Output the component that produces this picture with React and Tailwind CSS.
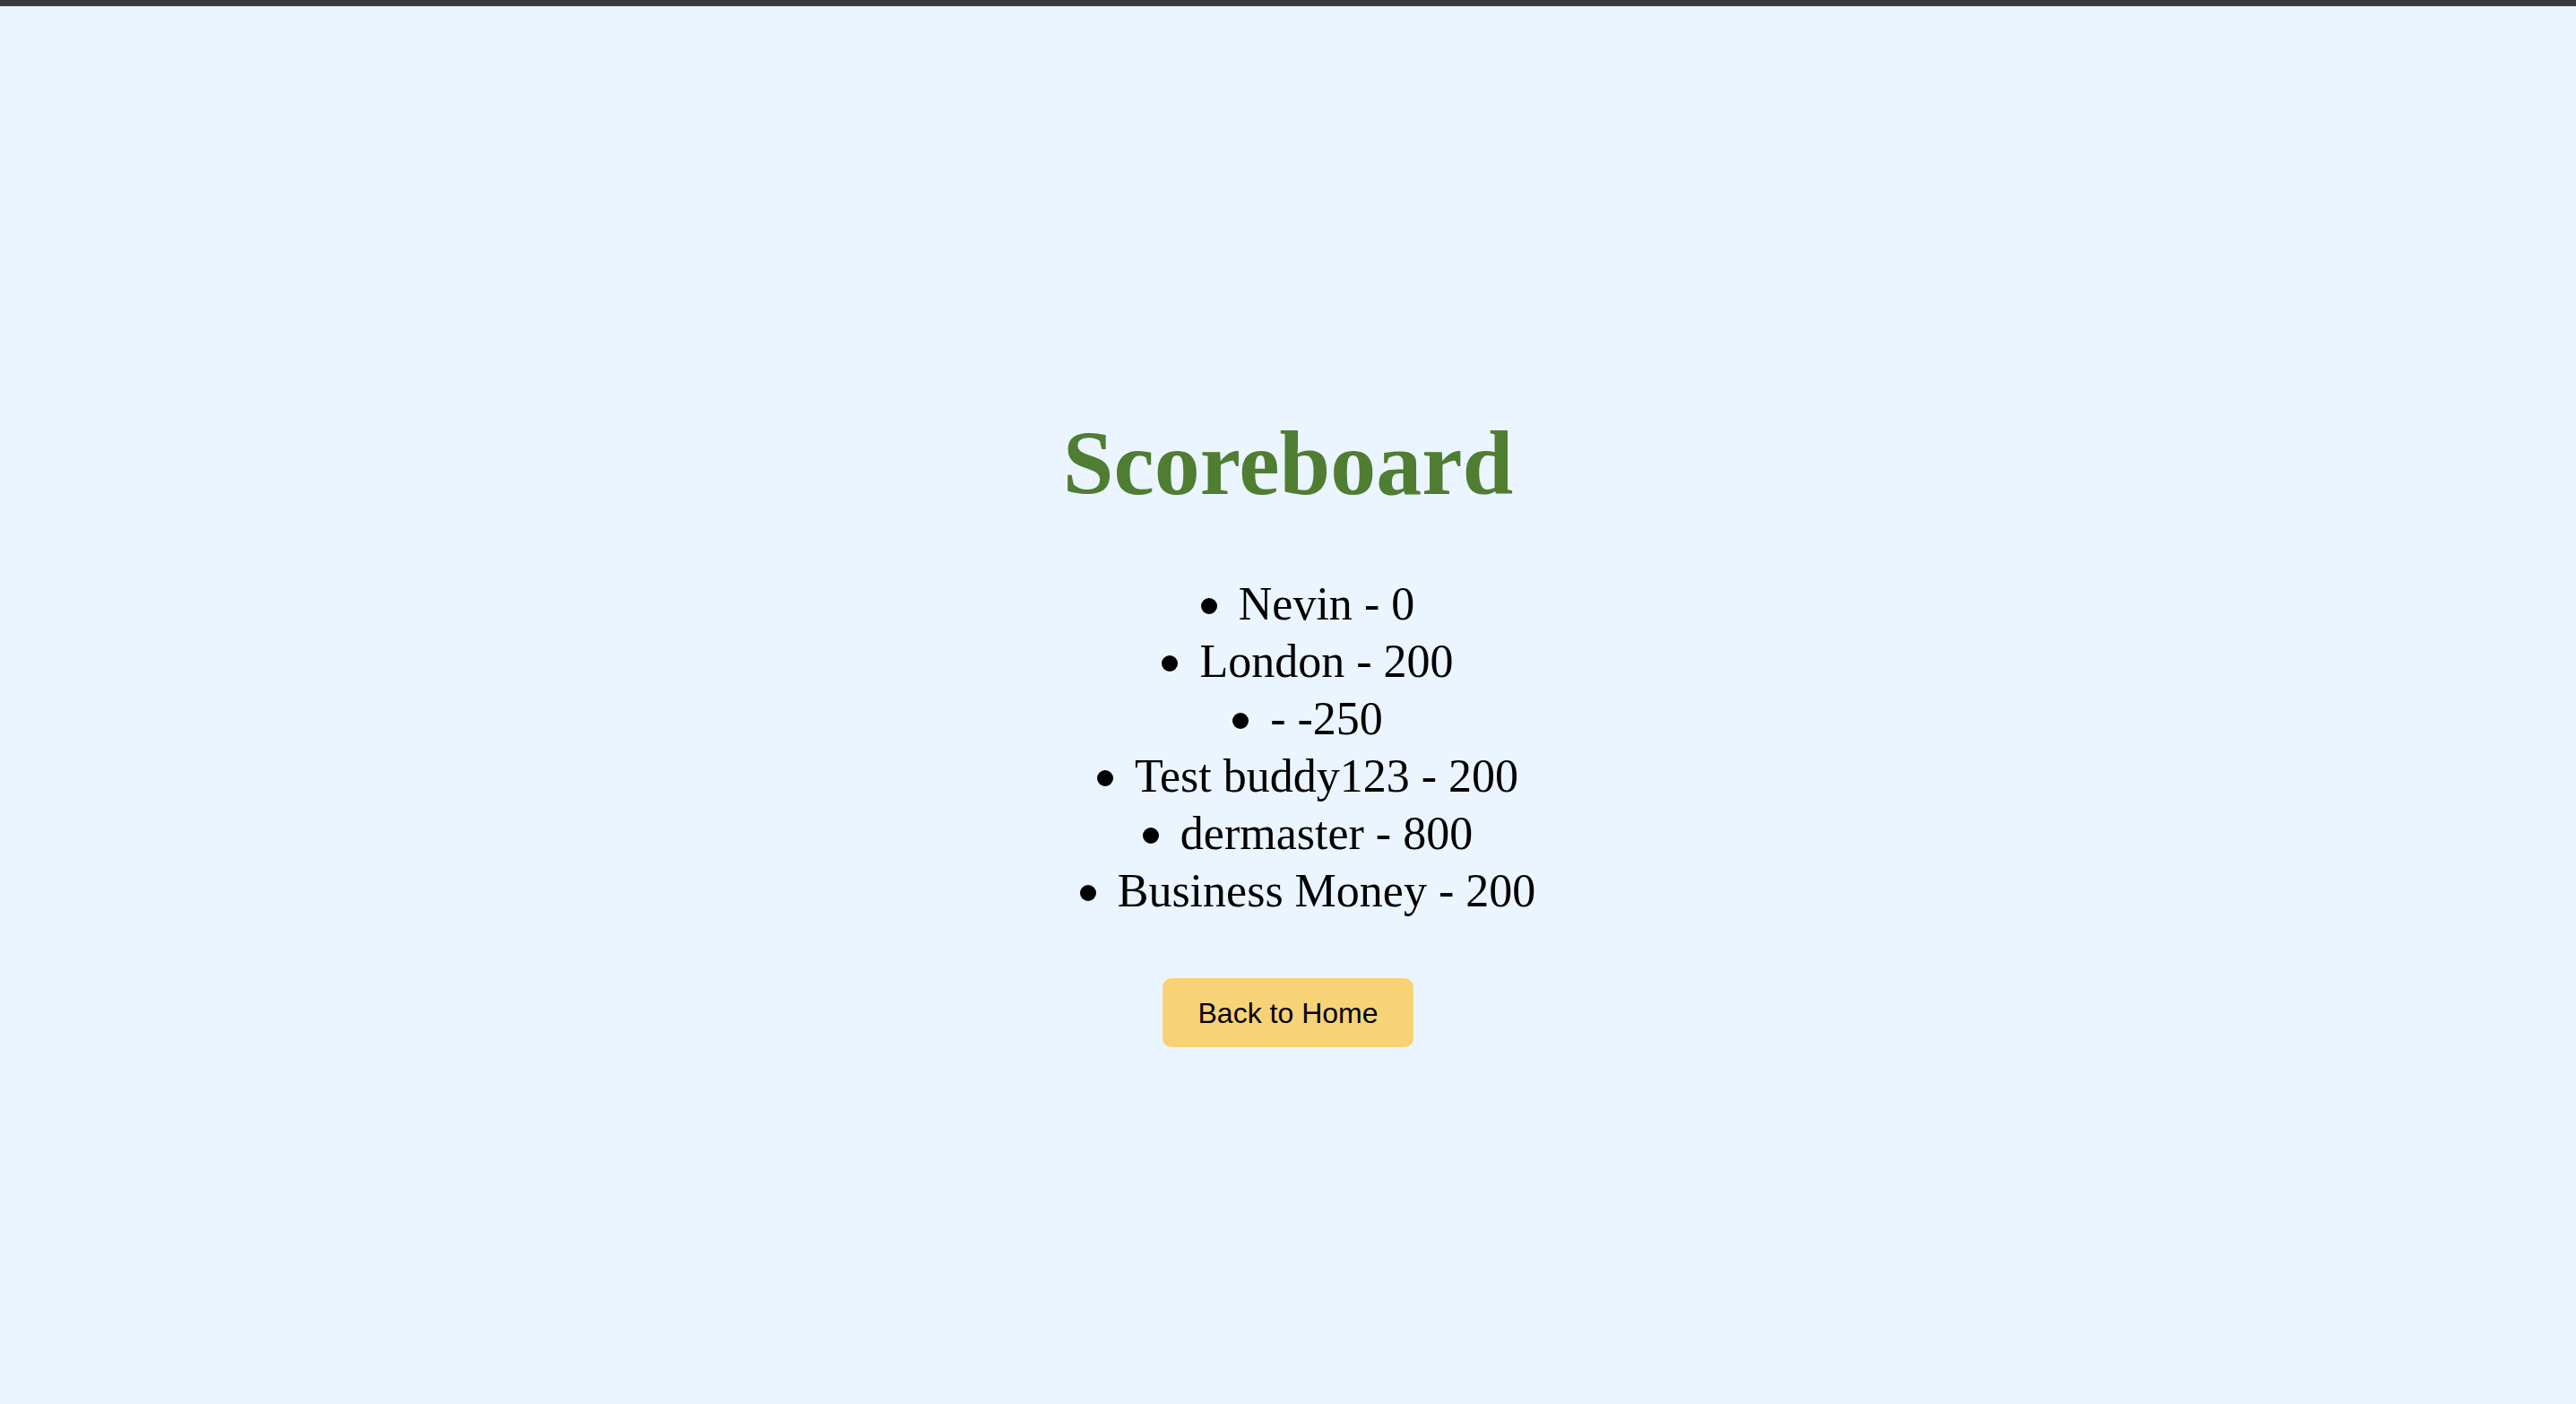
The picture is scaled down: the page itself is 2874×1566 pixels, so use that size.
import React from "react";

const scores = [
  { name: "Nevin", score: 0 },
  { name: "London", score: 200 },
  { name: "", score: -250 },
  { name: "Test buddy123", score: 200 },
  { name: "dermaster", score: 800 },
  { name: "Business Money", score: 200 },
];

export default function App() {
  return (
    <div className="min-h-screen bg-[#ebf5ff]">
      <div className="h-[7px] bg-[#3a3a3a] border-b border-[#4d4d4d]" />
      <main className="flex flex-col items-center pt-[459px] text-center">
        <h1 className="font-['Liberation_Serif',serif] text-[102px] leading-none font-bold text-[#4f7d32]">
          Scoreboard
        </h1>
        <ul className="mt-[74px] pl-[44px] font-['Liberation_Serif',serif] text-[52px] leading-[64px] text-black">
          {scores.map((s, i) => (
            <li key={i}>
              <span className="inline-block w-[18px] h-[18px] rounded-full bg-black mr-[24px] align-[6px]" />
              {s.name ? `${s.name} ` : ""}- {s.score}
            </li>
          ))}
        </ul>
        <button className="mt-[65px] h-[77px] px-[40px] rounded-[10px] bg-[#f7d277] font-['Liberation_Sans',sans-serif] text-[32px] text-black">
          Back to Home
        </button>
      </main>
    </div>
  );
}
